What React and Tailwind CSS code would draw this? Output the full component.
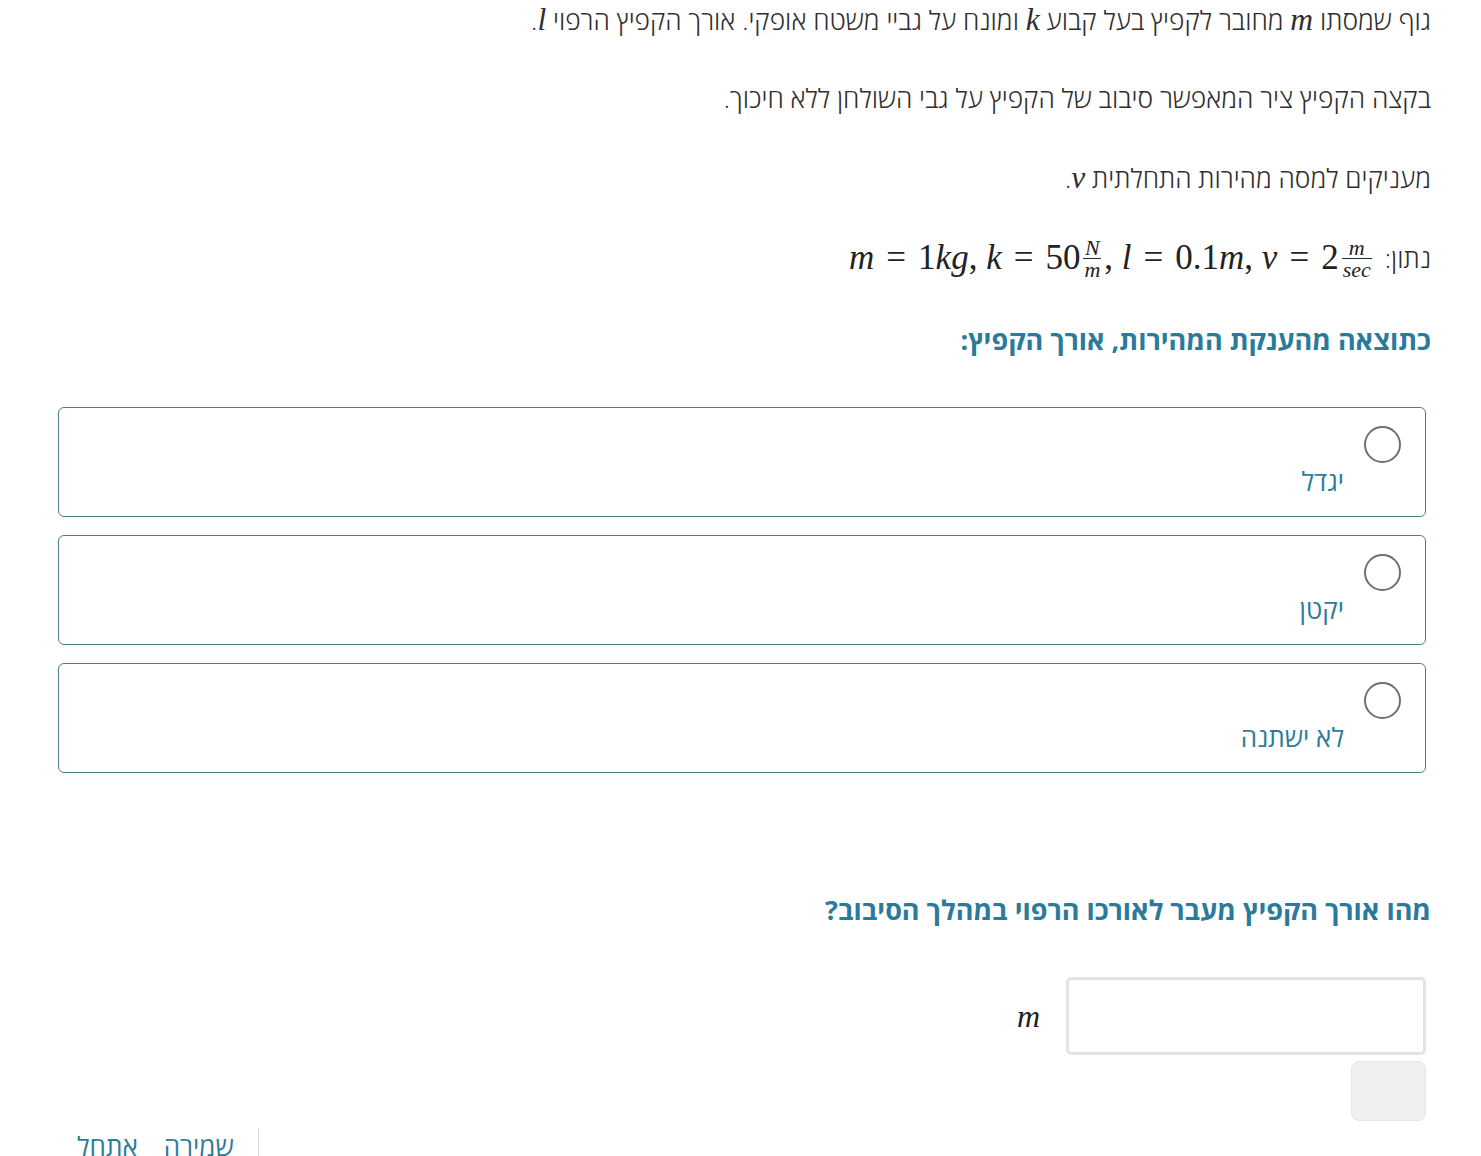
import { useState } from 'react';

const hebrew = { fontFamily: '"Open Sans", "Liberation Sans", "DejaVu Sans", sans-serif' };
const mathFont = { fontFamily: '"Liberation Serif", "DejaVu Serif", serif' };

function V({ children }) {
  return <i style={mathFont} className="italic text-[1.2em] leading-none">{children}</i>;
}

function Frac({ top, bottom }) {
  return (
    <span className="inline-flex flex-col items-center align-middle mx-[3px] text-[22px] leading-[21px]">
      <span className="italic px-[1px]">{top}</span>
      <span className="h-px w-full bg-gray-800" />
      <span className="italic px-[1px]">{bottom}</span>
    </span>
  );
}

function Eq() {
  return <span className="mx-[12px]">=</span>;
}

function Option({ label, checked, onSelect }) {
  return (
    <div
      onClick={onSelect}
      className="h-[110px] border border-[#4f7b8a] rounded-[6px] bg-white pr-[24px] pt-[18px] cursor-pointer"
    >
      <div className="w-[37px] h-[37px] rounded-full border-2 border-[#707070] flex items-center justify-center">
        {checked && <div className="w-[19px] h-[19px] rounded-full bg-[#2e7b9c]" />}
      </div>
      <div className="mr-[57px] text-[26px] leading-[36px] font-normal text-[#2f7c9a]">{label}</div>
    </div>
  );
}

export default function App() {
  const [selected, setSelected] = useState(null);
  const options = ['יגדל', 'יקטן', 'לא ישתנה'];

  return (
    <div dir="rtl" style={hebrew} className="bg-white h-[1156px] overflow-hidden text-[#2f2f2f] font-light">
      <div className="pr-[50px]">
        <p className="text-[26.3px] leading-[40px]">
          גוף שמסתו <V>m</V> מחובר לקפיץ בעל קבוע <V>k</V> ומונח על גביי משטח אופקי. אורך הקפיץ הרפוי <V>l</V>.
        </p>
        <p className="text-[26.3px] leading-[40px] mt-[38px]">
          בקצה הקפיץ ציר המאפשר סיבוב של הקפיץ על גבי השולחן ללא חיכוך.
        </p>
        <p className="text-[26.3px] leading-[40px] mt-[40px]">
          מעניקים למסה מהירות התחלתית <V>v</V>.
        </p>
        <p className="text-[26.3px] leading-[44px] mt-[38px] flex items-center gap-[10px]">
          <span>נתון:</span>
          <span dir="ltr" style={mathFont} className="text-[35px] text-[#222] flex items-center">
            <i>m</i><Eq />1<i>kg</i>,&nbsp;<i>k</i><Eq />50<Frac top="N" bottom="m" />,&nbsp;<i>l</i><Eq />0.1<i>m</i>,&nbsp;<i>v</i><Eq />2<Frac top="m" bottom="sec" />
          </span>
        </p>
        <h2 className="text-[27px] leading-[40px] mt-[40px] font-bold text-[#2b7a9c]">
          כתוצאה מהענקת המהירות, אורך הקפיץ:
        </h2>
      </div>

      <div className="mr-[55px] ml-[58px] mt-[47px] flex flex-col gap-[18px]">
        {options.map((o, i) => (
          <Option key={o} label={o} checked={selected === i} onSelect={() => setSelected(i)} />
        ))}
      </div>

      <div className="pr-[50px] mt-[117px]">
        <h2 className="text-[27px] leading-[40px] font-bold text-[#2b7a9c]">
          מהו אורך הקפיץ מעבר לאורכו הרפוי במהלך הסיבוב?
        </h2>
      </div>

      <div className="mr-[55px] mt-[47px] flex flex-col items-start">
        <div className="flex items-center gap-[26px]">
          <input
            type="text"
            className="w-[360px] h-[78px] border-[3px] border-[#e4e4e4] rounded-[5px] bg-white outline-none px-3 text-[24px]"
          />
          <span style={mathFont} className="italic text-[32px] text-[#222]">m</span>
        </div>
        <button className="mt-[6px] w-[75px] h-[60px] rounded-[8px] bg-[#efefef] border border-[#e6e6e6]" />
      </div>

      <div className="mt-[7px] flex justify-end pl-[77px]">
        <div className="flex items-start">
          <div className="w-px h-[30px] bg-[#d9d9d9] ml-[24px]" />
          <button className="text-[26px] leading-[36px] font-normal text-[#2f7c9a] ml-[26px]">שמירה</button>
          <button className="text-[26px] leading-[36px] font-normal text-[#2f7c9a]">אתחל</button>
        </div>
      </div>
    </div>
  );
}
